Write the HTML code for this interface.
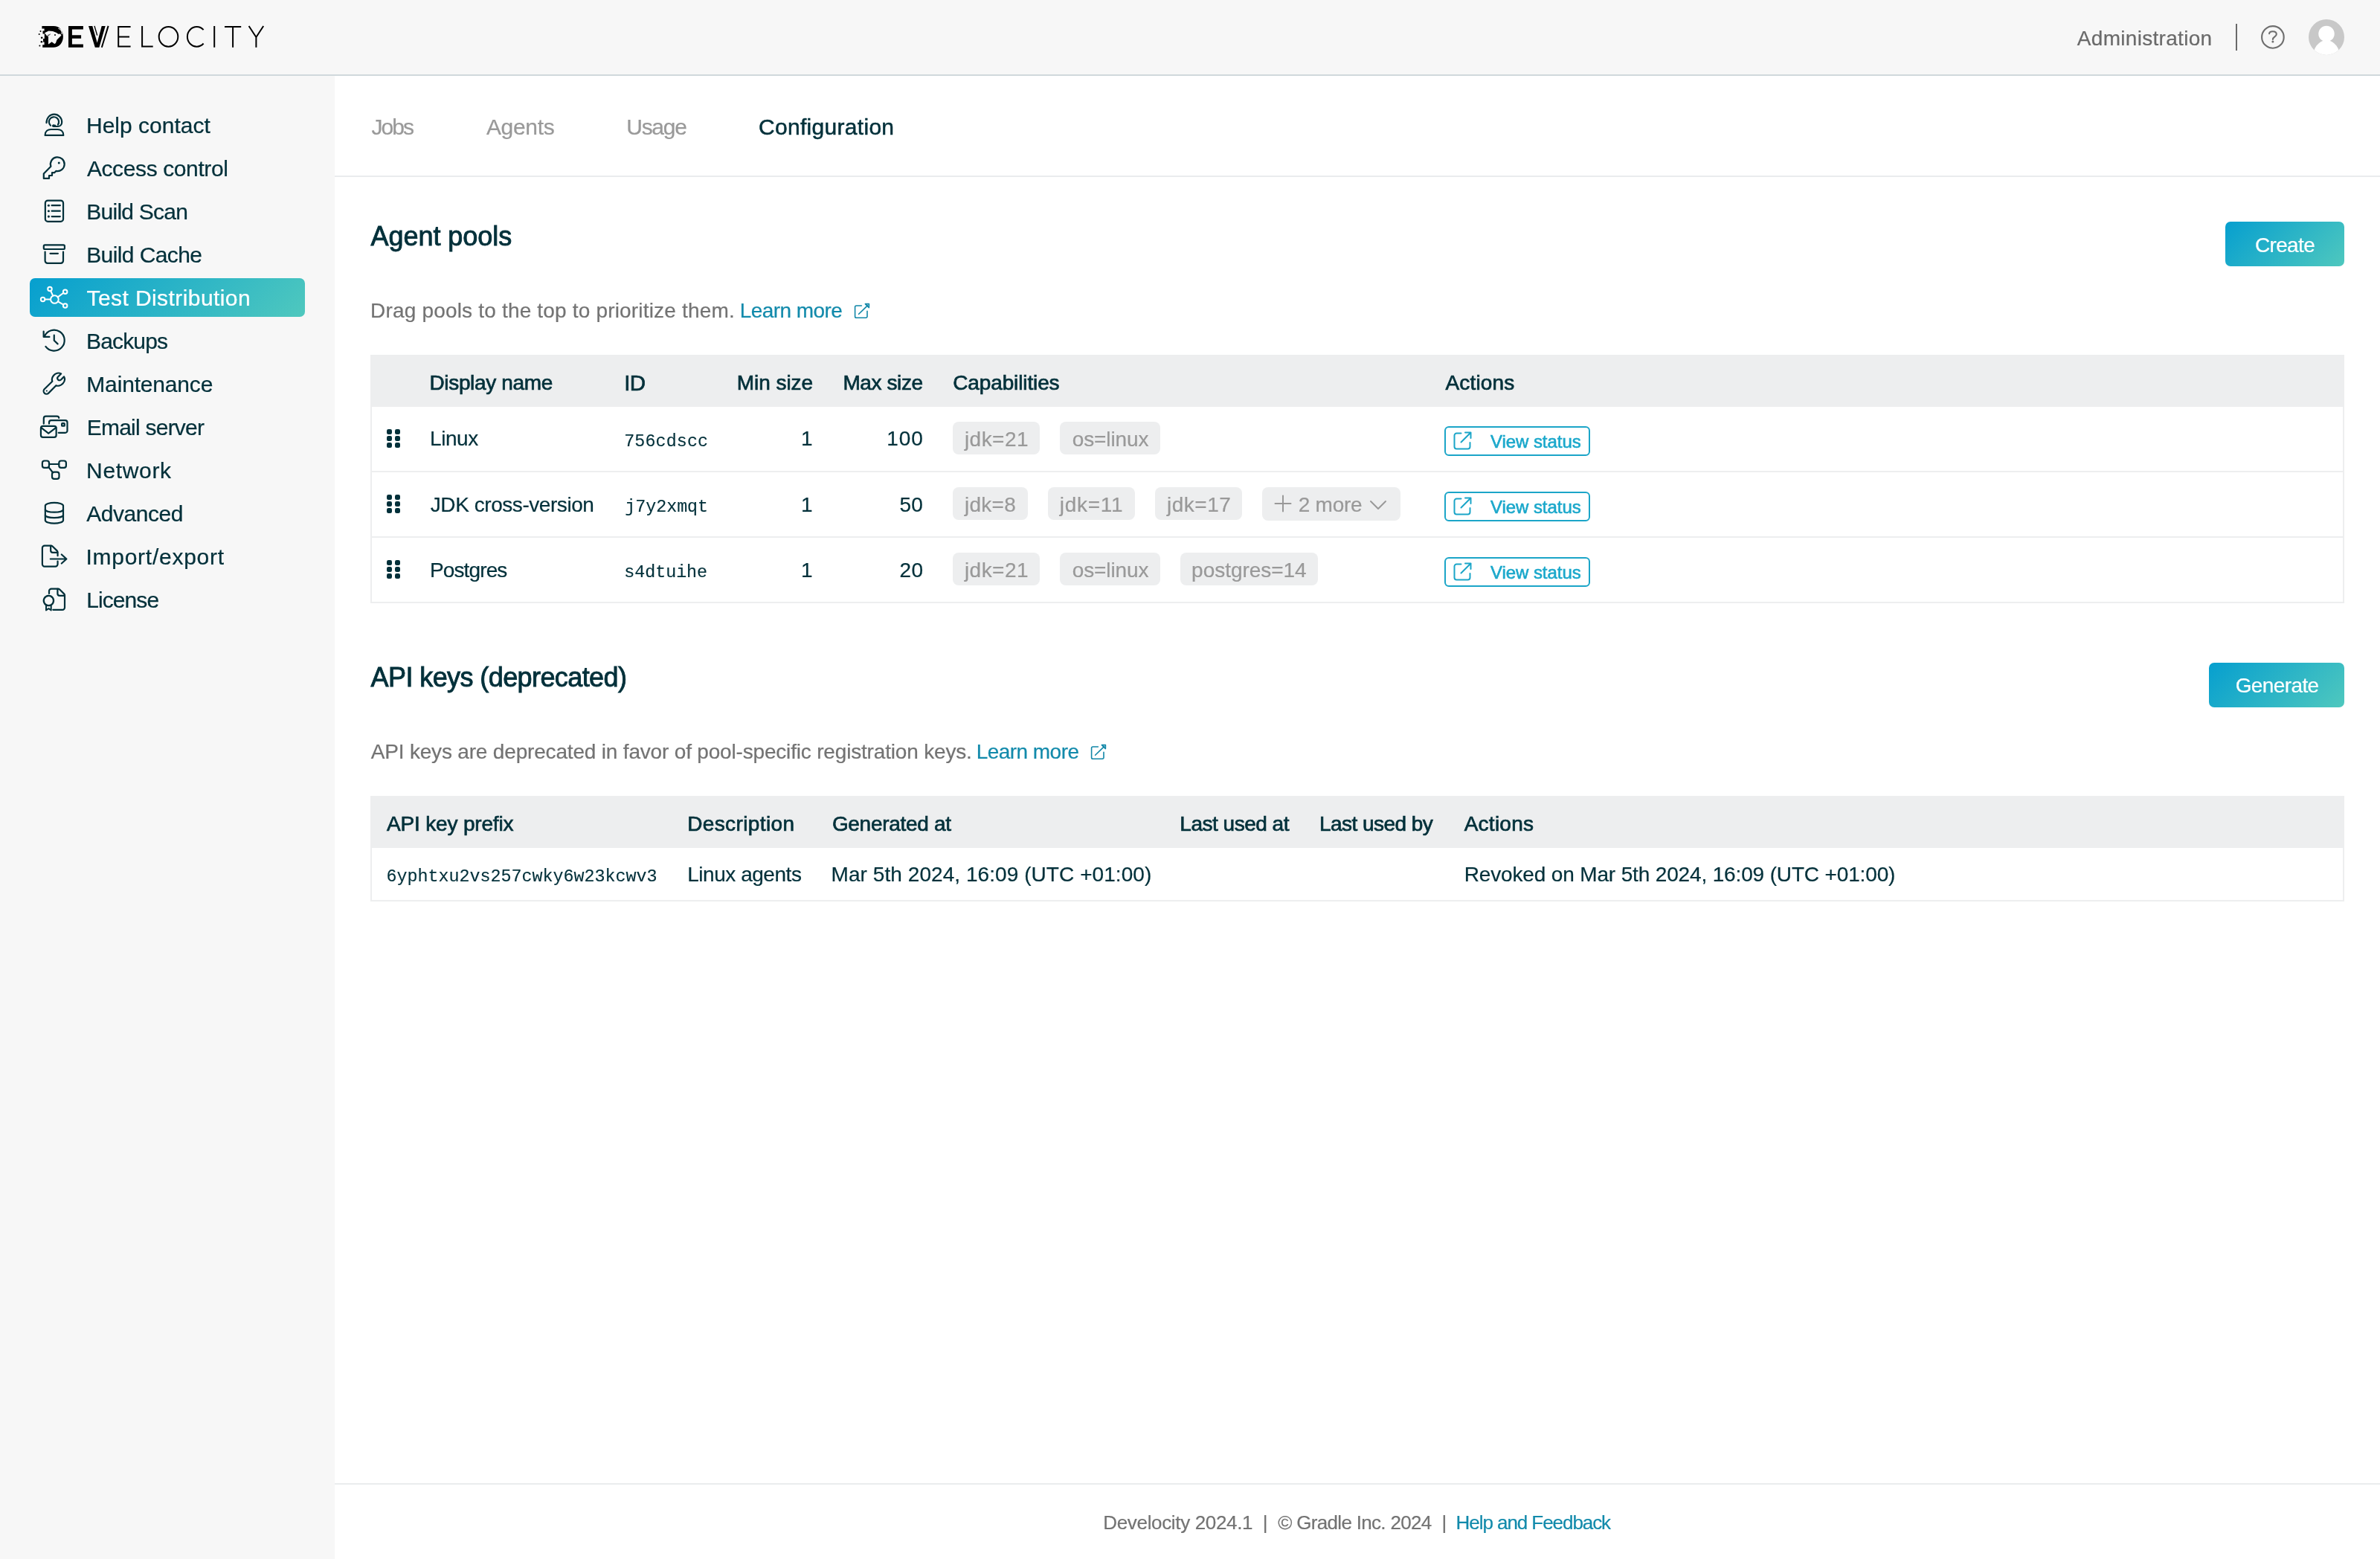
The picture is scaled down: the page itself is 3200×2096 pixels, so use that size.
<!DOCTYPE html>
<html><head><meta charset="utf-8"><title>Develocity</title>
<style>
html,body{margin:0;padding:0}
body{width:3200px;height:2096px;position:relative;overflow:hidden;background:#fff;font-family:'Liberation Sans',sans-serif}
.a{position:absolute}
.t{position:absolute;white-space:pre;font-family:'Liberation Sans',sans-serif}
.m{font-family:'Liberation Mono',monospace}
.chip{position:absolute;background:#edeeef;border-radius:8px;height:44px}
.vs{position:absolute;box-sizing:border-box;border:2px solid #1ba5c8;border-radius:6px;width:196px;height:40px;left:1942px}
.grad{background:linear-gradient(135deg,#069fcf 0%,#4fc8be 100%)}
svg{position:absolute;overflow:visible}
</style></head><body>

<div class="a" style="left:0;top:0;width:3200px;height:100px;background:#f7f7f7"></div>
<div class="a" style="left:0;top:100px;width:3200px;height:2px;background:#d0d8dc"></div>
<div class="a" style="left:0;top:102px;width:450px;height:1994px;background:#f7f7f7"></div>
<div class="a grad" style="left:40px;top:374px;width:370px;height:52px;border-radius:7px"></div>
<div class="a" style="left:450px;top:236px;width:2750px;height:2px;background:#eaecee"></div>
<div class="a" style="left:450px;top:1994px;width:2750px;height:2px;background:#eaecee"></div>
<div class="a" style="left:3006px;top:32px;width:2px;height:36px;background:#6a6a6a"></div>
<div class="a grad" style="left:2992px;top:298px;width:160px;height:60px;border-radius:7px"></div>
<div class="a grad" style="left:2970px;top:891px;width:182px;height:60px;border-radius:7px"></div>
<div class="a" style="left:498px;top:477px;width:2654px;height:70px;background:#edeeef"></div>
<div class="a" style="left:498px;top:547px;width:2654px;height:264px;box-sizing:border-box;border:2px solid #edeeef;border-top:none"></div>
<div class="a" style="left:500px;top:633px;width:2650px;height:2px;background:#edeeef"></div>
<div class="a" style="left:500px;top:721px;width:2650px;height:2px;background:#edeeef"></div>
<div class="a" style="left:498px;top:1070px;width:2654px;height:70px;background:#edeeef"></div>
<div class="a" style="left:498px;top:1140px;width:2654px;height:72px;box-sizing:border-box;border:2px solid #edeeef;border-top:none"></div>
<div class="a" style="left:520.1px;top:577.0px;width:7.1px;height:7.3px;border-radius:2.3px;background:#02303a"></div>
<div class="a" style="left:530.6px;top:577.0px;width:7.1px;height:7.3px;border-radius:2.3px;background:#02303a"></div>
<div class="a" style="left:520.1px;top:585.8px;width:7.1px;height:7.3px;border-radius:2.3px;background:#02303a"></div>
<div class="a" style="left:530.6px;top:585.8px;width:7.1px;height:7.3px;border-radius:2.3px;background:#02303a"></div>
<div class="a" style="left:520.1px;top:594.5px;width:7.1px;height:7.3px;border-radius:2.3px;background:#02303a"></div>
<div class="a" style="left:530.6px;top:594.5px;width:7.1px;height:7.3px;border-radius:2.3px;background:#02303a"></div>
<div class="a" style="left:520.1px;top:665.0px;width:7.1px;height:7.3px;border-radius:2.3px;background:#02303a"></div>
<div class="a" style="left:530.6px;top:665.0px;width:7.1px;height:7.3px;border-radius:2.3px;background:#02303a"></div>
<div class="a" style="left:520.1px;top:673.8px;width:7.1px;height:7.3px;border-radius:2.3px;background:#02303a"></div>
<div class="a" style="left:530.6px;top:673.8px;width:7.1px;height:7.3px;border-radius:2.3px;background:#02303a"></div>
<div class="a" style="left:520.1px;top:682.5px;width:7.1px;height:7.3px;border-radius:2.3px;background:#02303a"></div>
<div class="a" style="left:530.6px;top:682.5px;width:7.1px;height:7.3px;border-radius:2.3px;background:#02303a"></div>
<div class="a" style="left:520.1px;top:753.0px;width:7.1px;height:7.3px;border-radius:2.3px;background:#02303a"></div>
<div class="a" style="left:530.6px;top:753.0px;width:7.1px;height:7.3px;border-radius:2.3px;background:#02303a"></div>
<div class="a" style="left:520.1px;top:761.8px;width:7.1px;height:7.3px;border-radius:2.3px;background:#02303a"></div>
<div class="a" style="left:530.6px;top:761.8px;width:7.1px;height:7.3px;border-radius:2.3px;background:#02303a"></div>
<div class="a" style="left:520.1px;top:770.5px;width:7.1px;height:7.3px;border-radius:2.3px;background:#02303a"></div>
<div class="a" style="left:530.6px;top:770.5px;width:7.1px;height:7.3px;border-radius:2.3px;background:#02303a"></div>
<div class="chip" style="left:1281px;top:567px;width:117px"></div>
<div class="chip" style="left:1425px;top:567px;width:135px"></div>
<div class="chip" style="left:1281px;top:655px;width:101px"></div>
<div class="chip" style="left:1409px;top:655px;width:117px"></div>
<div class="chip" style="left:1553px;top:655px;width:117px"></div>
<div class="chip" style="left:1697px;top:655px;width:186px;height:45px"></div>
<div class="chip" style="left:1281px;top:743px;width:117px"></div>
<div class="chip" style="left:1425px;top:743px;width:135px"></div>
<div class="chip" style="left:1587px;top:743px;width:185px"></div>
<div class="vs" style="top:573px"></div>
<svg style="left:1953px;top:580px" width="26" height="26" viewBox="0 0 26 26" fill="none" stroke="#1ba5c8" stroke-width="2" stroke-linecap="round" stroke-linejoin="round"><path d="M11.5 2.5H5.5a3 3 0 0 0-3 3v15a3 3 0 0 0 3 3h15a3 3 0 0 0 3-3v-5.5"/><path d="M11.5 14.5L24.5 1.5M17 1.5h7.5V9"/></svg>
<div class="vs" style="top:661px"></div>
<svg style="left:1953px;top:668px" width="26" height="26" viewBox="0 0 26 26" fill="none" stroke="#1ba5c8" stroke-width="2" stroke-linecap="round" stroke-linejoin="round"><path d="M11.5 2.5H5.5a3 3 0 0 0-3 3v15a3 3 0 0 0 3 3h15a3 3 0 0 0 3-3v-5.5"/><path d="M11.5 14.5L24.5 1.5M17 1.5h7.5V9"/></svg>
<div class="vs" style="top:749px"></div>
<svg style="left:1953px;top:756px" width="26" height="26" viewBox="0 0 26 26" fill="none" stroke="#1ba5c8" stroke-width="2" stroke-linecap="round" stroke-linejoin="round"><path d="M11.5 2.5H5.5a3 3 0 0 0-3 3v15a3 3 0 0 0 3 3h15a3 3 0 0 0 3-3v-5.5"/><path d="M11.5 14.5L24.5 1.5M17 1.5h7.5V9"/></svg>
<svg style="left:1714px;top:666px" width="22" height="22" viewBox="0 0 22 22" fill="none" stroke="#999" stroke-width="2" stroke-linecap="round"><path d="M11 0.5v21M0.5 11h21"/></svg>
<svg style="left:1842px;top:673px" width="22" height="12" viewBox="0 0 22 12" fill="none" stroke="#999" stroke-width="2" stroke-linecap="round" stroke-linejoin="round"><path d="M1 1l10 10L21 1"/></svg>
<svg style="left:0;top:0" width="3200" height="900" viewBox="0 0 3200 900" fill="none" stroke="#02303a" stroke-width="2.2" stroke-linecap="round" stroke-linejoin="round">
<g transform="translate(50 145)" ><path d="M12.5 20.2C12.5 13.5 17 8.6 22.8 8.6S33.2 13.5 33.2 19.2C33.2 23 30.5 25 27.5 25H23"/>
<path d="M18 23.7A6.6 6.6 0 1 1 27.9 22.6"/>
<rect x="20.3" y="23" width="4.8" height="2.4" rx="1.2" fill="#02303a" stroke-width="1"/>
<path d="M10.6 36.9C10.6 31.5 14.5 29 18.5 29H27.4C31.4 29 35.3 31.5 35.3 36.9Z"/></g>
<g transform="translate(50 203)" ><path d="M18.4 20.8L8.8 30.5V36.9H16V33H20V29.2H23.1L25.3 26.9A9.4 9.4 0 1 0 18.4 20.8Z"/>
<circle cx="29.25" cy="16.1" r="1.5" fill="#02303a" stroke="none"/></g>
<g transform="translate(50 260)" ><rect x="10.84" y="9.6" width="24.2" height="28.2" rx="3.4"/>
<path d="M19.6 16.2H30.8M19.6 23.7H30.8M19.6 31.1H30.8"/>
<circle cx="15.4" cy="16.2" r="1.55" fill="#02303a" stroke="none"/><circle cx="15.4" cy="23.7" r="1.55" fill="#02303a" stroke="none"/><circle cx="15.4" cy="31.1" r="1.55" fill="#02303a" stroke="none"/></g>
<g transform="translate(50 318)" ><rect x="8.8" y="11.4" width="28.1" height="5.6" rx="1.6"/>
<path d="M10.6 20.5V32.6A3.2 3.2 0 0 0 13.8 35.8H31.8A3.2 3.2 0 0 0 35 32.6V20.5"/>
<path d="M17.5 22.8H27.9"/></g>
<g transform="translate(45 375)" stroke="#ffffff" stroke-width="2"><circle cx="28.4" cy="27.5" r="5.3"/>
<circle cx="22" cy="13.5" r="2.75"/><circle cx="42.65" cy="17.2" r="2.75"/><circle cx="12.6" cy="27.6" r="2.75"/><circle cx="42.65" cy="36.1" r="2.75"/>
<path d="M23.15 16L26.2 22.7M40.4 18.8L32.8 24.4M15.35 27.6H23.1M32.9 30.3L40.3 34.7"/></g>
<g transform="translate(50 434)" ><path d="M9.9 18A14 14 0 1 1 11.4 31.9"/>
<path d="M8.66 11.5V18.9H16.4"/>
<path d="M22.77 16.7V23.7L27.6 28.4"/></g>
<g transform="translate(50 492)" ><path d="M32.1 10.4C29 8.6 24.6 9.6 21.9 13C19.8 15.6 19.6 18.6 20.3 20.7L9.6 31.2C8.2 32.8 8.3 35.2 9.8 36.6C11.3 38.1 13.7 38.1 15.2 36.6L25.4 26.2C28 27.2 32 26.4 34.4 23.8C37 21 37.6 17.2 36.1 14.4L32 18.5C30.8 19.6 29 19.5 28 18.4C27 17.3 27 15.6 28.1 14.5Z"/>
<circle cx="12.8" cy="33.5" r="1.1" fill="#02303a" stroke="none"/></g>
<g transform="translate(45 550)" ><path d="M13.8 19.6V12.4A2.8 2.8 0 0 1 16.6 9.6H31.5A2.8 2.8 0 0 1 34.3 12"/>
<path d="M21 19.6V17.9A2.8 2.8 0 0 1 23.8 15.1H42.7A2.8 2.8 0 0 1 45.5 17.9V29A2.8 2.8 0 0 1 42.7 31.8H33.7"/>
<rect x="38.1" y="19.2" width="3.7" height="3.5" rx="0.8"/>
<rect x="9.94" y="22.9" width="20.7" height="14.9" rx="2.8"/>
<path d="M10.2 24.9L20.2 32.7L30.4 24.9"/></g>
<g transform="translate(45 608)" ><rect x="11.9" y="11.5" width="9.1" height="9.35" rx="2.9"/>
<rect x="34.3" y="11.5" width="9.6" height="9.35" rx="2.9"/>
<rect x="25" y="26.6" width="9.5" height="9.2" rx="2.9"/>
<path d="M21 16H34.3M20.6 20.4L26 27.2"/></g>
<g transform="translate(50 666)" ><path d="M10.84 13.8A12.1 4.25 0 0 1 35 13.8V33.7A12.1 4.2 0 0 1 10.84 33.7Z"/>
<path d="M10.84 19.3A12.1 3.6 0 0 0 35 19.3M10.84 26.7A12.1 3.6 0 0 0 35 26.7"/></g>
<g transform="translate(45 724)" ><path d="M32.55 23.25V18.6C32.55 17.8 32.2 17 31.6 16.4L25.6 10.5C25 9.9 24.2 9.56 23.4 9.56H15A3.1 3.1 0 0 0 11.9 12.66V34.6A3.1 3.1 0 0 0 15 37.7H29.45A3.1 3.1 0 0 0 32.55 34.6V30.6"/>
<path d="M23.15 9.8V16A2.8 2.8 0 0 0 25.95 18.8H32.3"/>
<path d="M22.8 27.5H44.2M37.8 21.5L44.4 27.5L37.8 33.5"/></g>
<g transform="translate(45 782)" ><path d="M21 15.9V12.7A3.1 3.1 0 0 1 24.1 9.6H33C33.8 9.6 34.6 9.9 35.2 10.5L41.1 16.4C41.7 17 42 17.8 42 18.6V34.7A3.1 3.1 0 0 1 38.9 37.85H26.3"/>
<path d="M32.4 9.8V16A2.8 2.8 0 0 0 35.2 18.8H41.7"/>
<circle cx="20.4" cy="25.5" r="6.6" stroke-width="2.4" stroke-dasharray="2.6 0.85"/>
<path d="M17 31.9V38.4L20.4 36.2L23.7 38.4V31.9" stroke-width="2"/></g>
</svg>
<svg style="left:3030px;top:20px" width="140" height="60" viewBox="3030 20 140 60" fill="none" stroke="#6e6e6e" stroke-width="2.1" stroke-linecap="round" stroke-linejoin="round"><circle cx="3055.9" cy="49.9" r="14.8"/><path d="M3051.1 45.3C3051.2 43.5 3053 42.2 3055.9 42.2C3058.9 42.2 3060.8 43.8 3060.8 45.9C3060.8 49.3 3055.9 49.3 3055.9 52.9"/><circle cx="3055.9" cy="56" r="1.5" fill="#6e6e6e" stroke="none"/><clipPath id="av"><circle cx="3128" cy="49.9" r="24"/></clipPath><circle cx="3128" cy="49.9" r="24" fill="#c8c8c8" stroke="none"/><g clip-path="url(#av)" fill="#fff" stroke="none"><circle cx="3128" cy="45.4" r="10.7"/><ellipse cx="3128" cy="80" rx="19" ry="26"/></g></svg>
<svg style="left:1145.0px;top:405.0px" width="30" height="30" viewBox="1145 405 30 30" fill="none" stroke="#1187a8" stroke-width="1.6" stroke-linecap="round" stroke-linejoin="round"><path d="M1158.4 411H1151.4A1.8 1.8 0 0 0 1149.6 412.8V425.4A1.8 1.8 0 0 0 1151.4 427.2H1164.2A1.8 1.8 0 0 0 1166 425.4V418.2"/><path d="M1154.6 422.3L1166.6 410.6"/><path d="M1163.4 408.6H1168.4V413.6Z"/></svg>
<svg style="left:1463.2px;top:997.7px" width="30" height="30" viewBox="1145 405 30 30" fill="none" stroke="#1187a8" stroke-width="1.6" stroke-linecap="round" stroke-linejoin="round"><path d="M1158.4 411H1151.4A1.8 1.8 0 0 0 1149.6 412.8V425.4A1.8 1.8 0 0 0 1151.4 427.2H1164.2A1.8 1.8 0 0 0 1166 425.4V418.2"/><path d="M1154.6 422.3L1166.6 410.6"/><path d="M1163.4 408.6H1168.4V413.6Z"/></svg>
<svg style="left:40px;top:20px" width="330" height="60" viewBox="40 20 330 60">
<path fill="#000" d="M56.4 34.9H72C80 34.9 84.9 41 84.9 49.2C84.9 57.6 79.5 63.8 71.5 63.8H57.2V60.3H59.6V56.5H58V52H59.8V45.5H57.5V41.5H59.6V38.6H56.4Z"/>
<path fill="#f7f7f7" d="M59.9 44.2L65.4 41.4L71 41.9L76 44L78.4 45.8L81.1 45.6L82.5 47.4L76.5 53.4L74.9 58L73.3 59L69.6 56.2L65.9 59L65 59.4V48.8L63.1 48.3Z"/>
<path fill="none" stroke="#f7f7f7" stroke-width="1.1" d="M78.5 38.2Q84 40 83.2 46"/>
<circle cx="74" cy="47" r="1" fill="#000"/><path d="M64 47.5Q66.5 47.3 67.7 45.8" fill="none" stroke="#000" stroke-width="0.9"/>
<circle cx="54.5" cy="41.9" r="1.0" fill="#000"/>
<circle cx="52.7" cy="46.0" r="1.0" fill="#000"/>
<circle cx="56.2" cy="50.7" r="1.3" fill="#000"/>
<circle cx="55.9" cy="56.2" r="1.3" fill="#000"/>
<circle cx="53.4" cy="61.5" r="1.0" fill="#000"/>
<path fill="#000" d="M92 34.9H111.9V39.6H96.9V47.2H109.1V51.8H96.9V59.4H111.9V63.8H92Z"/>
<path fill="#000" d="M119 34.9H124.3L130.7 57.5L136.7 34.9H141.7L133.4 63.8H127.8Z"/>
<path fill="none" stroke="#000" stroke-width="1.4" d="M127 34.9L130.7 47.6"/>
<path fill="none" stroke="#000" stroke-width="2" d="M145.6 34.9L136.8 63.8"/>
<g fill="none" stroke="#000" stroke-width="2.0">
<path d="M175.6 36.1H159.2V62.6H175.6M159.2 49.4H174"/>
<path d="M191.1 35V62.6H205.7"/>
<ellipse cx="226.5" cy="49.35" rx="12.8" ry="13.3"/>
<path d="M273.6 40.2C271.3 37.6 268.2 36.05 264.6 36.05C257.5 36.05 251.9 42 251.9 49.35S257.5 62.65 264.6 62.65C268.2 62.65 271.3 61.1 273.6 58.5"/>
<path d="M288.2 35V63.7"/>
<path d="M302 36.1H324.2M313.1 36.1V63.7"/>
<path d="M334.6 35L344.4 50L354.2 35M344.4 50V63.7"/>
</g></svg>
<div class="a" style="left:0;top:0;width:3200px;height:2096px;will-change:transform">
<span class="t" style="left:2792.8px;top:37.6px;font-size:28px;line-height:28px;color:#6a6a6a;letter-spacing:0.30px;-webkit-text-stroke:0.22px #6a6a6a">Administration</span>
<span class="t" style="left:116.0px;top:154.4px;font-size:30px;line-height:30px;color:#02303a;letter-spacing:0.01px;-webkit-text-stroke:0.24px #02303a">Help contact</span>
<span class="t" style="left:116.9px;top:212.4px;font-size:30px;line-height:30px;color:#02303a;letter-spacing:-0.39px;-webkit-text-stroke:0.24px #02303a">Access control</span>
<span class="t" style="left:116.3px;top:270.4px;font-size:30px;line-height:30px;color:#02303a;letter-spacing:-0.75px;-webkit-text-stroke:0.24px #02303a">Build Scan</span>
<span class="t" style="left:116.2px;top:328.4px;font-size:30px;line-height:30px;color:#02303a;letter-spacing:-0.60px;-webkit-text-stroke:0.24px #02303a">Build Cache</span>
<span class="t" style="left:116.5px;top:386.4px;font-size:30px;line-height:30px;color:#ffffff;letter-spacing:0.42px;-webkit-text-stroke:0.24px #ffffff">Test Distribution</span>
<span class="t" style="left:116.1px;top:444.4px;font-size:30px;line-height:30px;color:#02303a;letter-spacing:-0.86px;-webkit-text-stroke:0.24px #02303a">Backups</span>
<span class="t" style="left:116.3px;top:502.4px;font-size:30px;line-height:30px;color:#02303a;letter-spacing:-0.17px;-webkit-text-stroke:0.24px #02303a">Maintenance</span>
<span class="t" style="left:116.7px;top:560.4px;font-size:30px;line-height:30px;color:#02303a;letter-spacing:-0.76px;-webkit-text-stroke:0.24px #02303a">Email server</span>
<span class="t" style="left:116.1px;top:618.4px;font-size:30px;line-height:30px;color:#02303a;letter-spacing:0.66px;-webkit-text-stroke:0.24px #02303a">Network</span>
<span class="t" style="left:116.2px;top:676.4px;font-size:30px;line-height:30px;color:#02303a;letter-spacing:-0.47px;-webkit-text-stroke:0.24px #02303a">Advanced</span>
<span class="t" style="left:115.4px;top:734.4px;font-size:30px;line-height:30px;color:#02303a;letter-spacing:0.75px;-webkit-text-stroke:0.24px #02303a">Import/export</span>
<span class="t" style="left:116.2px;top:792.4px;font-size:30px;line-height:30px;color:#02303a;letter-spacing:-0.92px;-webkit-text-stroke:0.24px #02303a">License</span>
<span class="t" style="left:499.4px;top:155.6px;font-size:30px;line-height:30px;color:#999999;letter-spacing:-1.93px;-webkit-text-stroke:0.24px #999999">Jobs</span>
<span class="t" style="left:653.9px;top:155.6px;font-size:30px;line-height:30px;color:#999999;letter-spacing:-0.30px;-webkit-text-stroke:0.24px #999999">Agents</span>
<span class="t" style="left:842.3px;top:155.6px;font-size:30px;line-height:30px;color:#999999;letter-spacing:-1.30px;-webkit-text-stroke:0.24px #999999">Usage</span>
<span class="t" style="left:1020.0px;top:155.6px;font-size:30px;line-height:30px;color:#02303a;letter-spacing:0.30px;-webkit-text-stroke:0.54px #02303a">Configuration</span>
<span class="t" style="left:498.5px;top:300.1px;font-size:36px;line-height:36px;color:#02303a;letter-spacing:-0.04px;-webkit-text-stroke:0.90px #02303a">Agent pools</span>
<span class="t" style="left:498.1px;top:404.3px;font-size:28px;line-height:28px;color:#737373;letter-spacing:0.18px;-webkit-text-stroke:0.22px #737373">Drag pools to the top to prioritize them.</span>
<span class="t" style="left:994.8px;top:404.3px;font-size:28px;line-height:28px;color:#128aab;letter-spacing:-0.56px;-webkit-text-stroke:0.22px #128aab">Learn more</span>
<span class="t" style="left:577.5px;top:500.9px;font-size:28px;line-height:28px;color:#02303a;letter-spacing:-0.35px;-webkit-text-stroke:0.70px #02303a">Display name</span>
<span class="t" style="left:839.2px;top:499.6px;font-size:29.5px;line-height:29.5px;color:#02303a;letter-spacing:-0.60px;-webkit-text-stroke:0.74px #02303a">ID</span>
<span class="t" style="left:990.8px;top:500.9px;font-size:28px;line-height:28px;color:#02303a;letter-spacing:-0.06px;-webkit-text-stroke:0.70px #02303a">Min size</span>
<span class="t" style="left:1133.4px;top:500.9px;font-size:28px;line-height:28px;color:#02303a;letter-spacing:-0.40px;-webkit-text-stroke:0.70px #02303a">Max size</span>
<span class="t" style="left:1281.2px;top:500.9px;font-size:28px;line-height:28px;color:#02303a;letter-spacing:-0.12px;-webkit-text-stroke:0.70px #02303a">Capabilities</span>
<span class="t" style="left:1943.5px;top:500.9px;font-size:28px;line-height:28px;color:#02303a;letter-spacing:0.15px;-webkit-text-stroke:0.70px #02303a">Actions</span>
<span class="t" style="left:3031.9px;top:315.8px;font-size:28px;line-height:28px;color:#ffffff;letter-spacing:-0.64px;-webkit-text-stroke:0.22px #ffffff">Create</span>
<span class="t" style="left:578.0px;top:576.4px;font-size:28px;line-height:28px;color:#02303a;letter-spacing:-0.42px;-webkit-text-stroke:0.22px #02303a">Linux</span>
<span class="t m" style="left:839.2px;top:583.2px;font-size:23.33px;line-height:23.33px;color:#02303a;letter-spacing:0.13px;-webkit-text-stroke:0.15px #02303a">756cdscc</span>
<span class="t" style="left:1076.9px;top:576.4px;font-size:28px;line-height:28px;color:#02303a;letter-spacing:0.00px;-webkit-text-stroke:0.22px #02303a">1</span>
<span class="t" style="left:1192.3px;top:576.4px;font-size:28px;line-height:28px;color:#02303a;letter-spacing:0.85px;-webkit-text-stroke:0.22px #02303a">100</span>
<span class="t" style="left:2003.9px;top:581.9px;font-size:24px;line-height:24px;color:#1ba8cb;letter-spacing:-0.05px;-webkit-text-stroke:0.60px #1ba8cb">View status</span>
<span class="t" style="left:578.8px;top:664.5px;font-size:28px;line-height:28px;color:#02303a;letter-spacing:-0.44px;-webkit-text-stroke:0.22px #02303a">JDK cross-version</span>
<span class="t m" style="left:840.2px;top:671.3px;font-size:23.33px;line-height:23.33px;color:#02303a;letter-spacing:-0.01px;-webkit-text-stroke:0.15px #02303a">j7y2xmqt</span>
<span class="t" style="left:1076.9px;top:664.5px;font-size:28px;line-height:28px;color:#02303a;letter-spacing:0.00px;-webkit-text-stroke:0.22px #02303a">1</span>
<span class="t" style="left:1209.6px;top:664.5px;font-size:28px;line-height:28px;color:#02303a;letter-spacing:0.20px;-webkit-text-stroke:0.22px #02303a">50</span>
<span class="t" style="left:2003.9px;top:669.9px;font-size:24px;line-height:24px;color:#1ba8cb;letter-spacing:-0.05px;-webkit-text-stroke:0.60px #1ba8cb">View status</span>
<span class="t" style="left:577.9px;top:752.6px;font-size:28px;line-height:28px;color:#02303a;letter-spacing:-0.86px;-webkit-text-stroke:0.22px #02303a">Postgres</span>
<span class="t m" style="left:839.2px;top:759.4px;font-size:23.33px;line-height:23.33px;color:#02303a;letter-spacing:-0.01px;-webkit-text-stroke:0.15px #02303a">s4dtuihe</span>
<span class="t" style="left:1076.9px;top:752.6px;font-size:28px;line-height:28px;color:#02303a;letter-spacing:0.00px;-webkit-text-stroke:0.22px #02303a">1</span>
<span class="t" style="left:1209.5px;top:752.6px;font-size:28px;line-height:28px;color:#02303a;letter-spacing:0.40px;-webkit-text-stroke:0.22px #02303a">20</span>
<span class="t" style="left:2003.9px;top:757.9px;font-size:24px;line-height:24px;color:#1ba8cb;letter-spacing:-0.05px;-webkit-text-stroke:0.60px #1ba8cb">View status</span>
<span class="t" style="left:1296.9px;top:577.0px;font-size:28px;line-height:28px;color:#999999;letter-spacing:0.48px;-webkit-text-stroke:0.22px #999999">jdk=21</span>
<span class="t" style="left:1441.8px;top:577.0px;font-size:28px;line-height:28px;color:#999999;letter-spacing:-0.13px;-webkit-text-stroke:0.22px #999999">os=linux</span>
<span class="t" style="left:1297.0px;top:665.0px;font-size:28px;line-height:28px;color:#999999;letter-spacing:0.25px;-webkit-text-stroke:0.22px #999999">jdk=8</span>
<span class="t" style="left:1424.7px;top:665.0px;font-size:28px;line-height:28px;color:#999999;letter-spacing:0.74px;-webkit-text-stroke:0.22px #999999">jdk=11</span>
<span class="t" style="left:1569.0px;top:665.0px;font-size:28px;line-height:28px;color:#999999;letter-spacing:0.50px;-webkit-text-stroke:0.22px #999999">jdk=17</span>
<span class="t" style="left:1745.8px;top:665.0px;font-size:28px;line-height:28px;color:#999999;letter-spacing:-0.28px;-webkit-text-stroke:0.22px #999999">2 more</span>
<span class="t" style="left:1296.9px;top:753.0px;font-size:28px;line-height:28px;color:#999999;letter-spacing:0.48px;-webkit-text-stroke:0.22px #999999">jdk=21</span>
<span class="t" style="left:1441.8px;top:753.0px;font-size:28px;line-height:28px;color:#999999;letter-spacing:-0.13px;-webkit-text-stroke:0.22px #999999">os=linux</span>
<span class="t" style="left:1602.1px;top:753.0px;font-size:28px;line-height:28px;color:#999999;letter-spacing:-0.03px;-webkit-text-stroke:0.22px #999999">postgres=14</span>
<span class="t" style="left:498.6px;top:892.8px;font-size:36px;line-height:36px;color:#02303a;letter-spacing:-0.59px;-webkit-text-stroke:0.90px #02303a">API keys (deprecated)</span>
<span class="t" style="left:498.7px;top:997.1px;font-size:28px;line-height:28px;color:#737373;letter-spacing:-0.18px;-webkit-text-stroke:0.22px #737373">API keys are deprecated in favor of pool-specific registration keys.</span>
<span class="t" style="left:1312.7px;top:997.1px;font-size:28px;line-height:28px;color:#128aab;letter-spacing:-0.54px;-webkit-text-stroke:0.22px #128aab">Learn more</span>
<span class="t" style="left:3005.7px;top:908.4px;font-size:28px;line-height:28px;color:#ffffff;letter-spacing:-0.61px;-webkit-text-stroke:0.22px #ffffff">Generate</span>
<span class="t" style="left:520.1px;top:1093.7px;font-size:28px;line-height:28px;color:#02303a;letter-spacing:-0.18px;-webkit-text-stroke:0.70px #02303a">API key prefix</span>
<span class="t" style="left:924.2px;top:1093.7px;font-size:28px;line-height:28px;color:#02303a;letter-spacing:0.38px;-webkit-text-stroke:0.70px #02303a">Description</span>
<span class="t" style="left:1118.9px;top:1093.7px;font-size:28px;line-height:28px;color:#02303a;letter-spacing:-0.31px;-webkit-text-stroke:0.70px #02303a">Generated at</span>
<span class="t" style="left:1586.3px;top:1093.7px;font-size:28px;line-height:28px;color:#02303a;letter-spacing:-0.49px;-webkit-text-stroke:0.70px #02303a">Last used at</span>
<span class="t" style="left:1774.0px;top:1093.7px;font-size:28px;line-height:28px;color:#02303a;letter-spacing:-0.55px;-webkit-text-stroke:0.70px #02303a">Last used by</span>
<span class="t" style="left:1968.7px;top:1093.7px;font-size:28px;line-height:28px;color:#02303a;letter-spacing:0.25px;-webkit-text-stroke:0.70px #02303a">Actions</span>
<span class="t m" style="left:519.5px;top:1168.4px;font-size:23.33px;line-height:23.33px;color:#02303a;letter-spacing:0.00px;-webkit-text-stroke:0.15px #02303a">6yphtxu2vs257cwky6w23kcwv3</span>
<span class="t" style="left:924.2px;top:1161.6px;font-size:28px;line-height:28px;color:#02303a;letter-spacing:-0.46px;-webkit-text-stroke:0.22px #02303a">Linux agents</span>
<span class="t" style="left:1117.6px;top:1161.6px;font-size:28px;line-height:28px;color:#02303a;letter-spacing:0.06px;-webkit-text-stroke:0.22px #02303a">Mar 5th 2024, 16:09 (UTC +01:00)</span>
<span class="t" style="left:1968.7px;top:1161.6px;font-size:28px;line-height:28px;color:#02303a;letter-spacing:-0.15px;-webkit-text-stroke:0.22px #02303a">Revoked on Mar 5th 2024, 16:09 (UTC +01:00)</span>
<span class="t" style="left:1483.3px;top:2034.3px;font-size:26px;line-height:26px;color:#737373;letter-spacing:-0.34px;-webkit-text-stroke:0.21px #737373">Develocity 2024.1</span>
<span class="t" style="left:1697.7px;top:2034.3px;font-size:26px;line-height:26px;color:#737373;letter-spacing:0.00px;-webkit-text-stroke:0.21px #737373">|</span>
<span class="t" style="left:1718.2px;top:2034.3px;font-size:26px;line-height:26px;color:#737373;letter-spacing:-0.68px;-webkit-text-stroke:0.21px #737373">© Gradle Inc. 2024</span>
<span class="t" style="left:1938.5px;top:2034.3px;font-size:26px;line-height:26px;color:#737373;letter-spacing:0.00px;-webkit-text-stroke:0.21px #737373">|</span>
<span class="t" style="left:1957.6px;top:2034.3px;font-size:26px;line-height:26px;color:#128aab;letter-spacing:-1.06px;-webkit-text-stroke:0.21px #128aab">Help and Feedback</span>
</div>
</body></html>
